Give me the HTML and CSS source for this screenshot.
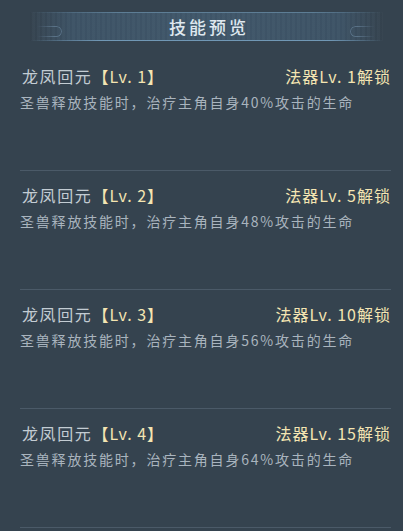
FILE: index.html
```html
<!DOCTYPE html>
<html lang="zh">
<head>
  <meta charset="UTF-8">
  <title>技能预览</title>
  <meta name="viewport" content="width=device-width, initial-scale=1.0">
  <link rel="stylesheet" href="styles.css">
</head>
<body>
  <div class="panel">
    <div class="header">
      <span class="cap cap-left"></span>
      <h2>技能预览</h2>
      <span class="cap cap-right"></span>
    </div>

    <ul class="skill-list">
      <li class="skill">
        <div class="skill-head">
          <span class="name">龙凤回元<em>【Lv. 1】</em></span>
          <span class="unlock">法器Lv. 1解锁</span>
        </div>
        <p class="desc">圣兽释放技能时，治疗主角自身40%攻击的生命</p>
      </li>
      <li class="skill">
        <div class="skill-head">
          <span class="name">龙凤回元<em>【Lv. 2】</em></span>
          <span class="unlock">法器Lv. 5解锁</span>
        </div>
        <p class="desc">圣兽释放技能时，治疗主角自身48%攻击的生命</p>
      </li>
      <li class="skill">
        <div class="skill-head">
          <span class="name">龙凤回元<em>【Lv. 3】</em></span>
          <span class="unlock">法器Lv. 10解锁</span>
        </div>
        <p class="desc">圣兽释放技能时，治疗主角自身56%攻击的生命</p>
      </li>
      <li class="skill">
        <div class="skill-head">
          <span class="name">龙凤回元<em>【Lv. 4】</em></span>
          <span class="unlock">法器Lv. 15解锁</span>
        </div>
        <p class="desc">圣兽释放技能时，治疗主角自身64%攻击的生命</p>
      </li>
    </ul>
  </div>
</body>
</html>
```

FILE: styles.css
```css
:root {
  --bg: #35434f;
  --line: #4b5a68;
  --name: #c3ccd3;
  --gold: #f4e5b2;
  --desc: #a9b4be;
  --title: #dfe8ef;
}

html, body {
  margin: 0;
  padding: 0;
}

body {
  background: var(--bg);
  font-family: "Noto Sans CJK SC", "Noto Sans", sans-serif;
  width: 403px;
  height: 531px;
  overflow: hidden;
}

.panel {
  padding-top: 12px;
}

.header {
  position: relative;
  height: 29px;
  margin: 0 20px 0 30px;
  background:
    repeating-linear-gradient(90deg, rgba(0,0,0,0.025) 0 2px, rgba(255,255,255,0.015) 2px 5px),
    linear-gradient(90deg, rgba(63,85,104,0), #3d5366 12%, #40576a 50%, #3d5366 88%, rgba(63,85,104,0));
  display: flex;
  align-items: center;
  justify-content: center;
}

.header::before,
.header::after {
  content: "";
  position: absolute;
  left: 0;
  right: 0;
  height: 1px;
}

.header::before {
  top: 0;
  background: linear-gradient(90deg, rgba(100,135,160,0), rgba(100,135,160,0.8) 25%, rgba(100,135,160,0.8) 80%, rgba(100,135,160,0));
}

.header::after {
  bottom: 0;
  background: linear-gradient(90deg, rgba(110,150,180,0), rgba(115,155,185,0.95) 20%, rgba(115,155,185,0.95) 85%, rgba(110,150,180,0));
}

.header h2 {
  margin: 0;
  padding-left: 5px;
  font-size: 17px;
  font-weight: 500;
  letter-spacing: 3px;
  color: var(--title);
  line-height: 29px;
}

.cap {
  position: absolute;
  top: 14px;
  width: 24px;
  height: 9px;
  border: 1px solid rgba(120,150,175,0.5);
}

.cap-left {
  left: 7px;
  border-left: none;
  border-radius: 0 6px 6px 0;
  -webkit-mask: linear-gradient(90deg, transparent, #000 70%);
  mask: linear-gradient(90deg, transparent, #000 70%);
}

.cap-right {
  right: 8px;
  border-right: none;
  border-radius: 6px 0 0 6px;
  -webkit-mask: linear-gradient(270deg, transparent, #000 70%);
  mask: linear-gradient(270deg, transparent, #000 70%);
}

.skill-list {
  list-style: none;
  margin: 11px 12px 0 20px;
  padding: 0;
}

.skill {
  padding: 14px 0 58px;
  border-bottom: 1px solid var(--line);
}

.skill-head {
  display: flex;
  justify-content: space-between;
  align-items: center;
  line-height: 20px;
  padding-left: 2px;
}

.name {
  font-size: 16px;
  letter-spacing: 1.6px;
  color: var(--name);
}

.name em {
  font-style: normal;
  color: var(--gold);
  letter-spacing: 1px;
}

.unlock {
  font-size: 16px;
  letter-spacing: 1px;
  color: var(--gold);
}

.desc {
  margin: 6px 0 0;
  font-size: 14px;
  line-height: 20px;
  letter-spacing: 1.8px;
  color: var(--desc);
}
```
